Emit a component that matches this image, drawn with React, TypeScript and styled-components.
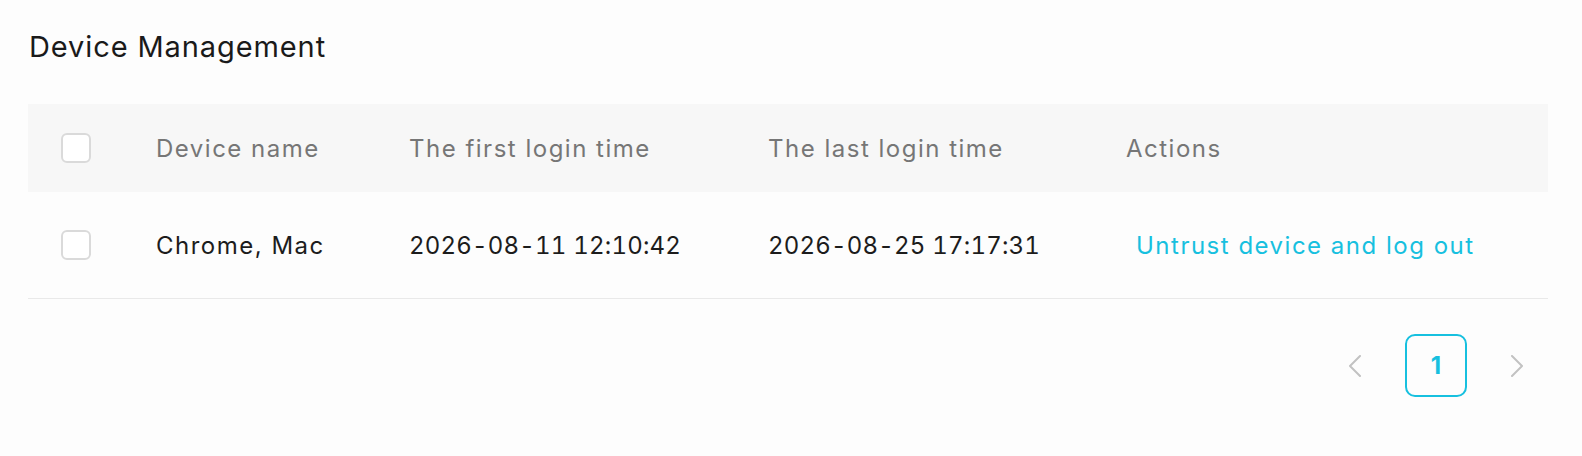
import React from "react";
import styled, { createGlobalStyle } from "styled-components";

const Global = createGlobalStyle`
  html, body { margin: 0; padding: 0; background: #fdfdfd; }
  body { font-family: Inter, "Noto Sans", "Liberation Sans", sans-serif; }
`;

const Page = styled.div`
  padding: 27px 34px 0 28px;
`;

const Title = styled.h1`
  margin: 0 0 0 1px;
  font-size: 29px;
  line-height: 40px;
  font-weight: 400;
  color: #1a1a1a;
  letter-spacing: 0.9px;
`;

const Table = styled.div`
  margin-top: 37px;
`;

const cols = "128px 253px 359px 358px 1fr";

const HeadRow = styled.div`
  display: grid;
  grid-template-columns: ${cols};
  align-items: center;
  height: 88px;
  background: #f7f7f7;
`;

const BodyRow = styled.div`
  display: grid;
  grid-template-columns: ${cols};
  align-items: center;
  height: 106px;
  border-bottom: 1px solid #e9e9e9;
`;

const CheckCell = styled.div`
  padding-left: 33px;
  display: flex;
  align-items: center;
`;

const Box = styled.span`
  width: 30px;
  height: 30px;
  box-sizing: border-box;
  border: 2px solid #dadada;
  border-radius: 6px;
  background: #fff;
`;

const HeadCell = styled.div`
  font-size: 24px;
  color: #767676;
  white-space: nowrap;
  letter-spacing: 1.5px;
`;

const Cell = styled.div<{ $link?: boolean; $time?: boolean }>`
  font-size: 24px;
  color: ${(p) => (p.$link ? "#17c0df" : "#1c1c1c")};
  padding-left: ${(p) => (p.$link ? "10px" : "0")};
  white-space: nowrap;
  letter-spacing: ${(p) => (p.$time ? "0.2px" : "1.5px")};
  font-variant-numeric: ${(p) => (p.$time ? "tabular-nums" : "normal")};
  cursor: ${(p) => (p.$link ? "pointer" : "default")};
`;

const Pager = styled.div`
  display: flex;
  justify-content: flex-end;
  gap: 19px;
  margin-top: 35px;
`;

const PageBtn = styled.div<{ $active?: boolean }>`
  width: 62px;
  height: 63px;
  box-sizing: border-box;
  display: flex;
  align-items: center;
  justify-content: center;
  border: ${(p) => (p.$active ? "2px solid #17c0df" : "none")};
  border-radius: 10px;
  color: #17c0df;
  font-size: 24px;
  font-weight: 700;
`;

const Chevron = ({ dir }: { dir: "left" | "right" }) => (
  <svg width="16" height="22" viewBox="0 0 16 22" fill="none">
    <path
      d={dir === "left" ? "M13 1 L3 11 L13 21" : "M3 1 L13 11 L3 21"}
      stroke="#c2c2c2"
      strokeWidth="2"
      strokeLinecap="round"
      strokeLinejoin="round"
    />
  </svg>
);

export default function App() {
  return (
    <>
      <Global />
      <Page>
        <Title>Device Management</Title>
        <Table>
          <HeadRow>
            <CheckCell>
              <Box />
            </CheckCell>
            <HeadCell>Device name</HeadCell>
            <HeadCell>The first login time</HeadCell>
            <HeadCell>The last login time</HeadCell>
            <HeadCell>Actions</HeadCell>
          </HeadRow>
          <BodyRow>
            <CheckCell>
              <Box />
            </CheckCell>
            <Cell>Chrome, Mac</Cell>
            <Cell $time>2026-08-11 12:10:42</Cell>
            <Cell $time>2026-08-25 17:17:31</Cell>
            <Cell $link>Untrust device and log out</Cell>
          </BodyRow>
        </Table>
        <Pager>
          <PageBtn>
            <Chevron dir="left" />
          </PageBtn>
          <PageBtn $active>1</PageBtn>
          <PageBtn>
            <Chevron dir="right" />
          </PageBtn>
        </Pager>
      </Page>
    </>
  );
}
